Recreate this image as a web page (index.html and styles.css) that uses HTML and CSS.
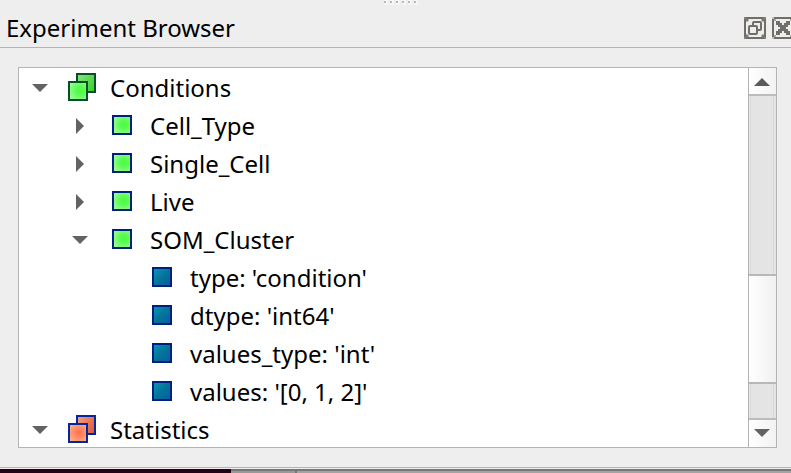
FILE: index.html
```html
<!DOCTYPE html>
<html lang="en">
<head>
<meta charset="utf-8">
<title>Experiment Browser</title>
<link rel="stylesheet" href="styles.css">
</head>
<body>
<svg class="defs" width="0" height="0">
  <defs>
    <radialGradient id="green" cx=".62" cy=".48" r=".72"><stop offset="0" stop-color="#48ff3e"/><stop offset=".3" stop-color="#58fc50"/><stop offset="1" stop-color="#a4fca0"/></radialGradient>
    <linearGradient id="greenBack" x1="0" y1="0" x2="1" y2=".6"><stop offset="0" stop-color="#8be482"/><stop offset="1" stop-color="#3fd338"/></linearGradient>
    <radialGradient id="red" cx=".55" cy=".48" r=".7"><stop offset="0" stop-color="#ff6f48"/><stop offset="1" stop-color="#ffb694"/></radialGradient>
    <linearGradient id="redBack" x1="0" y1="0" x2="1" y2=".6"><stop offset="0" stop-color="#f5a287"/><stop offset="1" stop-color="#e0603c"/></linearGradient>
    <linearGradient id="blue" x1="0" y1="0" x2="1" y2="1"><stop offset="0" stop-color="#0898b8"/><stop offset=".5" stop-color="#04749a"/><stop offset="1" stop-color="#045ca6"/></linearGradient>
    <symbol id="down" viewBox="0 0 16 8"><path d="M0 0H16L8 8Z" fill="#636363"/></symbol>
    <symbol id="right" viewBox="0 0 8 16"><path d="M0 0V16L8 8Z" fill="#636363"/></symbol>
    <symbol id="item" viewBox="0 0 20 20"><rect x="1" y="1" width="18" height="18" fill="url(#green)" stroke="#00207f" stroke-width="2"/></symbol>
    <symbol id="leaf" viewBox="0 0 20 20"><rect x="1" y="1" width="18" height="18" fill="url(#blue)" stroke="#00207f" stroke-width="2"/></symbol>
    <symbol id="frame" viewBox="0 0 22 22"><path d="M2 1H20M2 21H20M1 2V20M21 2V20" fill="none" stroke="#716e69" stroke-width="2"/><path d="M0 0h2v2H0zM20 0h2v2h-2zM0 20h2v2H0zM20 20h2v2h-2z" fill="#c4c3c1"/><path d="M2 2h2v2H2zM18 2h2v2h-2zM2 18h2v2H2zM18 18h2v2h-2z" fill="#aaa8a5"/></symbol>
  </defs>
</svg>
<div class="dock">
  <div class="grip"><i></i><i></i><i></i><i></i><i></i><i></i></div>
  <header class="titlebar">
    <span class="title">Experiment Browser</span>
    <svg class="tool" width="22" height="22" viewBox="0 0 22 22" fill="none" stroke="#716e69">
      <use href="#frame"/>
      <rect x="9" y="5" width="8" height="8" rx="1" stroke-width="2"/>
      <rect x="5" y="9" width="8" height="8" rx="1" fill="#eee" stroke-width="2"/>
    </svg>
    <svg class="tool" width="22" height="22" viewBox="0 0 22 22">
      <use href="#frame"/>
      <path d="M4 4H8V6H10V8H12V6H14V4H18V8H16V10H14V12H16V14H18V18H14V16H12V14H10V16H8V18H4V14H6V12H8V10H6V8H4Z" fill="#716e69"/>
    </svg>
  </header>
  <main class="content">
    <div class="tree">
      <div class="rows">
        <div class="row"><svg class="arrow"><use href="#down"/></svg>
          <svg class="group" viewBox="0 0 28 28" stroke="#045028" stroke-width="2"><rect x="9" y="1" width="18" height="18" fill="url(#greenBack)"/><rect x="1" y="9" width="18" height="18" fill="url(#green)"/></svg><span>Conditions</span></div>
        <div class="row l1"><svg class="arrow side"><use href="#right"/></svg><svg class="icon"><use href="#item"/></svg><span>Cell_Type</span></div>
        <div class="row l1"><svg class="arrow side"><use href="#right"/></svg><svg class="icon"><use href="#item"/></svg><span>Single_Cell</span></div>
        <div class="row l1"><svg class="arrow side"><use href="#right"/></svg><svg class="icon"><use href="#item"/></svg><span>Live</span></div>
        <div class="row l1"><svg class="arrow"><use href="#down"/></svg><svg class="icon"><use href="#item"/></svg><span>SOM_Cluster</span></div>
        <div class="row l2"><svg class="icon"><use href="#leaf"/></svg><span>type: 'condition'</span></div>
        <div class="row l2"><svg class="icon"><use href="#leaf"/></svg><span>dtype: 'int64'</span></div>
        <div class="row l2"><svg class="icon"><use href="#leaf"/></svg><span>values_type: 'int'</span></div>
        <div class="row l2"><svg class="icon"><use href="#leaf"/></svg><span>values: '[0, 1, 2]'</span></div>
        <div class="row"><svg class="arrow"><use href="#down"/></svg>
          <svg class="group" viewBox="0 0 28 28" stroke="#04289c" stroke-width="2"><rect x="9" y="1" width="18" height="18" fill="url(#redBack)"/><rect x="1" y="9" width="18" height="18" fill="url(#red)"/></svg><span>Statistics</span></div>
      </div>
      <div class="scrollbar">
        <div class="step up"><svg width="16" height="8" viewBox="0 0 16 8"><path d="M0 8H16L8 0Z" fill="#5a5a5a"/></svg></div>
        <div class="track above"></div>
        <div class="thumb"></div>
        <div class="track below"></div>
        <div class="step dn"><svg width="16" height="8"><use href="#down"/></svg></div>
      </div>
    </div>
  </main>
  <footer class="edge"><div class="dark"></div><div class="mid"></div><div class="rest"></div></footer>
</div>
</body>
</html>
```
FILE: styles.css
```css
* { box-sizing: border-box; }
body { margin: 0; background: #eee; color: #000; font: 24px/38px "Noto Sans", sans-serif; overflow: hidden; }
.defs { position: absolute; }
svg { display: block; flex: none; }
.dock { width: 791px; height: 473px; display: flex; flex-direction: column; overflow: hidden; }
.grip { height: 5px; display: flex; justify-content: center; gap: 2px; padding-left: 11px; }
.grip i { width: 4px; height: 5px; background: linear-gradient(#b8b8b8, #b8b8b8) 0 1px / 2px 2px no-repeat #f6f6f6; }
.titlebar { height: 43px; display: flex; align-items: flex-start; padding: 4px 0 0 6px; border-bottom: 1px solid #b4b4b4; }
.title { flex: 1; white-space: nowrap; }
.tool { margin-top: 8px; margin-right: 6px; }
.tool:last-child { margin-right: -3px; }
.content { height: 419px; padding: 19px 14px 0 18px; }
.tree { width: 759px; height: 381px; border: 1px solid #b4b4b4; background: #fff; display: flex; overflow: hidden; }
.rows { flex: 1; min-width: 0; }
.row { height: 38px; display: flex; align-items: center; padding-left: 13px; white-space: nowrap; }
.l1 { padding-left: 53px; }
.l2 { padding-left: 133px; }
.row span { position: relative; top: 1px; }
.arrow { width: 16px; height: 8px; margin: 2px 20px 0 0; }
.l1 .arrow { margin-right: 24px; }
.l1 .arrow.side { width: 8px; height: 16px; margin: 2px 28px 0 4px; }
.group { width: 28px; height: 28px; margin-right: 14px; }
.icon { width: 20px; height: 20px; margin-right: 18px; }
.scrollbar { width: 28px; border-left: 1px solid #b4b4b4; display: flex; flex-direction: column; }
.step { display: flex; justify-content: center; align-items: center; padding-right: 2px; background: linear-gradient(90deg, #fff, #f2f2f2); }
.up { height: 28px; padding-top: 1px; border-bottom: 2px solid #bcbcbc; }
.dn { height: 29px; padding-bottom: 2px; border-top: 2px solid #bcbcbc; }
.track { background: linear-gradient(90deg, #e8e8e8 1px, #d8d8d8 1px 2px, #e4e4e4 2px 24px, #d8d8d8 24px 25px, #e4e4e4 25px); }
.above { height: 178px; }
.below { height: 34px; }
.thumb { height: 110px; border: solid #b8b8b8; border-width: 2px 0; background: linear-gradient(90deg, #fff, #f0f0f0); }
.edge { height: 6px; display: flex; border-top: 1px solid #b4b4b4; padding-top: 1px; }
.dark { width: 231px; background: #220018; }
.mid { width: 66px; background: #999; border-top: 2px solid #777; border-right: 2px solid #777; }
.rest { flex: 1; background: #a4a4a4; border-top: 2px solid #777; }
```
